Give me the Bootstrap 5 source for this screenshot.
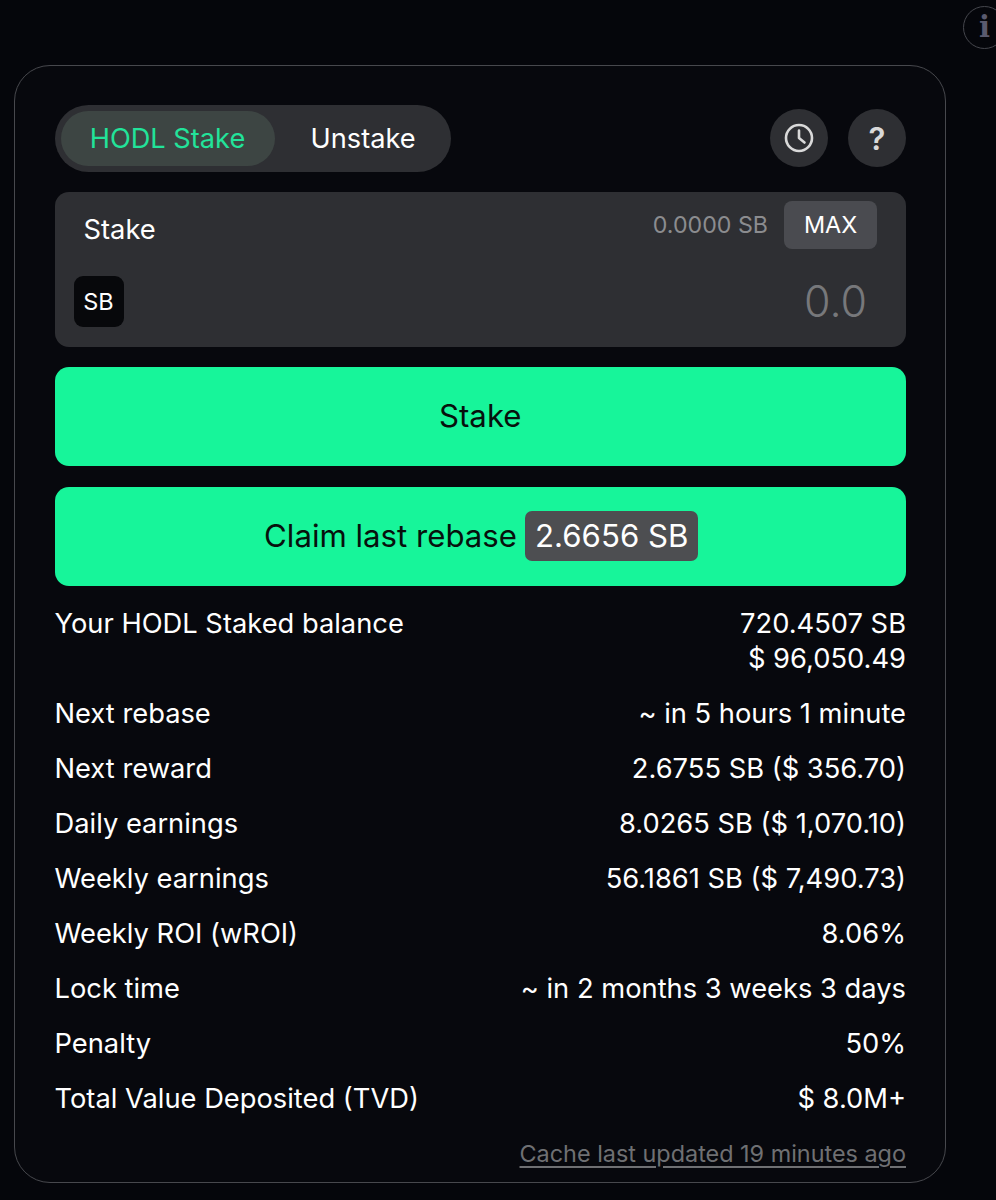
<!DOCTYPE html>
<html lang="en">
<head>
    <meta charset="UTF-8">
    <meta name="viewport" content="width=device-width, initial-scale=1">
    <title>HODL Stake</title>
    <link href="https://cdn.jsdelivr.net/npm/bootstrap@5.3.0/dist/css/bootstrap.min.css" rel="stylesheet">
    <script src="https://cdn.jsdelivr.net/npm/bootstrap@5.3.0/dist/js/bootstrap.bundle.min.js"></script>
    <style>
        html, body {
            height: 1200px;
            overflow: hidden;
        }
        body {
            background-color: #05060b;
            color: #fff;
            font-family: Inter, "Liberation Sans", sans-serif;
            font-size: 27.3px;
            line-height: 35px;
        }
        .info-bar {
            height: 65px;
            padding-top: 6px;
            padding-left: 963px;
        }
        .info-dot {
            width: 43px;
            height: 43px;
            border: 1px solid #45464d;
            color: #5a5a6e;
            font-family: "DejaVu Serif", serif;
            font-weight: 700;
            font-size: 29px;
            line-height: 1;
        }
        .stake-box {
            width: 932px;
            height: 1118px;
            margin-left: 14px;
            padding: 39px 39px 0 39.5px;
            border: 1.5px solid #47484d;
            border-radius: 36px;
            background: #07080d;
        }
        .toggle-wrap {
            width: 396px;
            height: 67px;
            padding: 6px;
            background: #2e2f33;
            font-size: 27.2px;
            white-space: nowrap;
        }
        .toggle-on,
        .toggle-off {
            height: 55px;
            line-height: 55px;
        }
        .toggle-on {
            width: 214px;
            color: #22e39a;
            background: #3d4543;
        }
        .toggle-off {
            padding-left: 36px;
        }
        .round-group {
            gap: 20px;
        }
        .round-btn {
            width: 58px;
            height: 58px;
            margin-top: 4px;
            background: #2e2f33;
            color: #d9d9d9;
            font-weight: 600;
            font-size: 31px;
        }
        .input-panel {
            height: 155px;
            margin-top: 20px;
            padding: 9px 29px 0 19px;
            background: #2e2f33;
            border-radius: 14px;
        }
        .panel-label {
            padding: 11px 0 0 10px;
        }
        .bal-text {
            color: #8b8c8f;
            font-size: 23.2px;
        }
        .max-btn {
            width: 93px;
            height: 48px;
            background: #4a4b50;
            border-radius: 8px;
            font-size: 23.4px;
            line-height: 48px;
        }
        .token-tag {
            width: 50px;
            height: 51px;
            margin-top: 27px;
            background: #07080b;
            border-radius: 9px;
            font-size: 23.5px;
        }
        .amount-text {
            margin-top: 27px;
            color: #77787b;
            font-size: 43px;
            font-weight: 300;
            padding-right: 10px;
        }
        .action-btn {
            height: 99px;
            margin-top: 20px;
            background: #17f59a;
            color: #07110d;
            border-radius: 14px;
            font-size: 31.2px;
        }
        .action-btn + .action-btn {
            margin-top: 21px;
            padding-left: 2px;
        }
        .reward-chip {
            height: 50px;
            margin: 0 0 2px 8px;
            padding: 0 10px;
            line-height: 50px;
            background: #4d4e51;
            color: #fff;
            border-radius: 7px;
        }
        .stat-list {
            margin-top: 20px;
            row-gap: 20px;
        }
        .cache-note {
            margin-top: 20px;
            color: #6f7073;
            font-size: 23.4px;
            text-underline-offset: 4px;
        }
    </style>
</head>
<body>
    <div class="info-bar">
        <div class="info-dot rounded-circle d-flex align-items-center justify-content-center">i</div>
    </div>

    <div class="stake-box">
        <div class="d-flex justify-content-between">
            <div class="toggle-wrap rounded-pill d-flex">
                <div class="toggle-on rounded-pill text-center">HODL Stake</div>
                <div class="toggle-off">Unstake</div>
            </div>
            <div class="d-flex round-group">
                <div class="round-btn rounded-circle d-flex align-items-center justify-content-center">
                    <svg width="30" height="30" viewBox="0 0 30 30" fill="none" stroke="#d9d9d9" stroke-width="2.6" stroke-linecap="round" stroke-linejoin="round">
                        <circle cx="15" cy="15" r="13"></circle>
                        <path d="M15 7.5V15L20.5 19.5"></path>
                    </svg>
                </div>
                <div class="round-btn rounded-circle d-flex align-items-center justify-content-center">?</div>
            </div>
        </div>

        <div class="input-panel">
            <div class="d-flex justify-content-between align-items-start">
                <div class="panel-label">Stake</div>
                <div class="d-flex align-items-center gap-3">
                    <span class="bal-text">0.0000 SB</span>
                    <span class="max-btn text-center">MAX</span>
                </div>
            </div>
            <div class="d-flex justify-content-between align-items-center">
                <div class="token-tag d-flex align-items-center justify-content-center">SB</div>
                <div class="amount-text">0.0</div>
            </div>
        </div>

        <div class="action-btn d-flex align-items-center justify-content-center">Stake</div>
        <div class="action-btn d-flex align-items-center justify-content-center">
            Claim last rebase <span class="reward-chip">2.6656 SB</span>
        </div>

        <div class="stat-list d-flex flex-column">
            <div class="d-flex justify-content-between">
                <div>Your HODL Staked balance</div>
                <div class="text-end">720.4507 SB<br>$ 96,050.49</div>
            </div>
            <div class="d-flex justify-content-between"><div>Next rebase</div><div>~ in 5 hours 1 minute</div></div>
            <div class="d-flex justify-content-between"><div>Next reward</div><div>2.6755 SB ($ 356.70)</div></div>
            <div class="d-flex justify-content-between"><div>Daily earnings</div><div>8.0265 SB ($ 1,070.10)</div></div>
            <div class="d-flex justify-content-between"><div>Weekly earnings</div><div>56.1861 SB ($ 7,490.73)</div></div>
            <div class="d-flex justify-content-between"><div>Weekly ROI (wROI)</div><div>8.06%</div></div>
            <div class="d-flex justify-content-between"><div>Lock time</div><div>~ in 2 months 3 weeks 3 days</div></div>
            <div class="d-flex justify-content-between"><div>Penalty</div><div>50%</div></div>
            <div class="d-flex justify-content-between"><div>Total Value Deposited (TVD)</div><div>$ 8.0M+</div></div>
        </div>

        <div class="cache-note text-end text-decoration-underline">Cache last updated 19 minutes ago</div>
    </div>
</body>
</html>
